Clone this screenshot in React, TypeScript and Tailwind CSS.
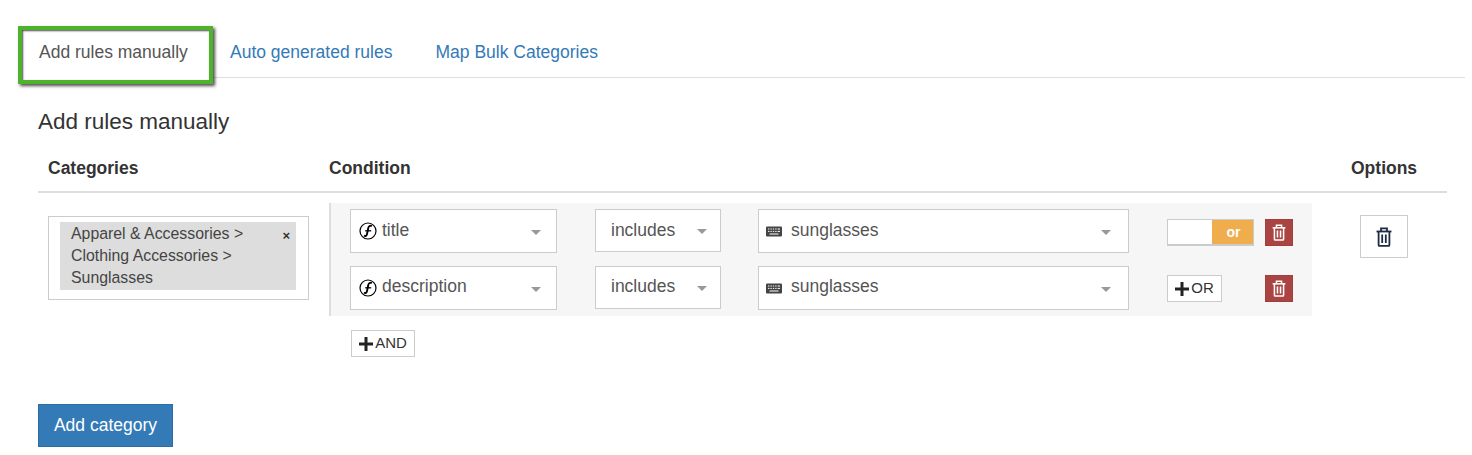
function TrashIcon({ className }: { className?: string }) {
  return (
    <svg viewBox="0 0 16 20" className={className} fill="none" stroke="currentColor" strokeWidth="1.8">
      <path d="M0.5 4.5h15" />
      <path d="M5 4V1.4h6V4" />
      <path d="M2.6 4.5v13.4c0 .6.4 1 1 1h8.8c.6 0 1-.4 1-1V4.5" />
      <path d="M6.2 7.5v8.5M9.8 7.5v8.5" />
    </svg>
  );
}

function FnIcon() {
  return (
    <svg viewBox="0 0 18 18" className="w-[18px] h-[18px] shrink-0 mr-[5px] text-black" fill="none" stroke="currentColor">
      <circle cx="9" cy="9" r="8" strokeWidth="1.2" />
      <path d="M12.8 4.2c-1.6-.9-3.1-.2-3.5 1.7l-1.3 6.2c-.4 1.8-1.4 2.3-3 1.6" strokeWidth="1.9" />
      <path d="M6.2 8.8h6" strokeWidth="1.3" />
    </svg>
  );
}

function KeyboardIcon() {
  return (
    <svg viewBox="0 0 16 11" className="w-4 h-[11px] shrink-0 text-[#444]">
      <rect x="0" y="0.5" width="16" height="10" rx="1" fill="currentColor" />
      <path d="M2 3h1.4M4.4 3h1.4M6.8 3h1.4M9.2 3h1.4M11.6 3h2.4M2 5.4h1.4M4.4 5.4h1.4M6.8 5.4h1.4M9.2 5.4h1.4M11.6 5.4h2.4M3.5 8h9" stroke="#fff" strokeWidth="1" />
    </svg>
  );
}

function Caret() {
  return <span className="w-0 h-0 mt-[2px] border-x-[5.5px] border-x-transparent border-t-[5.5px] border-t-[#999] shrink-0" />;
}

function Field({ width, height, icon, label, pad, textShift }: { width: string; height: string; icon?: React.ReactNode; label: string; pad: string; textShift: string }) {
  return (
    <div className={`${width} ${height} ${pad} bg-white border border-[#ccc] flex items-center text-[17.5px] text-[#555] shrink-0`}>
      {icon}
      <span className={`flex-1 ${textShift}`}>{label}</span>
      <Caret />
    </div>
  );
}

function DeleteButton() {
  return (
    <button className="w-[28px] h-[27px] bg-[#a94442] border border-[#a23f3d] flex items-center justify-center text-white">
      <TrashIcon className="w-[14px] h-[17px]" />
    </button>
  );
}

function PlusButton({ label, className }: { label: string; className: string }) {
  return (
    <button className={`${className} h-[27px] bg-white border border-[#ccc] flex items-center justify-center gap-[2px] text-[15px] text-[#333]`}>
      <svg viewBox="0 0 14 14" className="w-[14px] h-[14px] text-[#222]" fill="currentColor">
        <path d="M5.5 0h3v5.5h5.5v3h-5.5v5.5h-3v-5.5h-5.5v-3h5.5z" />
      </svg>
      {label}
    </button>
  );
}

export default function App() {
  return (
    <div className="w-[1472px] h-[455px] bg-white overflow-hidden font-['Liberation_Sans',Arial,sans-serif] text-[#333]">
      <div className="mt-[26px] ml-[18px] w-[1447px] h-[52px] flex items-start border-b border-[#ddd] pt-0">
        <div className="w-[195px] h-[58px] shrink-0 border-[4px] border-[#4fb22b] bg-white shadow-[2px_2px_3px_rgba(0,0,0,0.7),inset_1px_1px_2px_rgba(0,0,0,0.7)] pl-[17px] pt-[10px] text-[17.5px] leading-[24px] text-[#555] relative">
          Add rules manually
        </div>
        <a className="ml-[17px] mt-[14px] text-[17.5px] leading-[24px] text-[#337ab7]">Auto generated rules</a>
        <a className="ml-[43px] mt-[14px] text-[17.5px] leading-[24px] text-[#337ab7]">Map Bulk Categories</a>
      </div>

      <div className="ml-[38px] w-[1409px]">
        <h3 className="mt-[30px] text-[22.5px] leading-[28px] font-normal text-[#333]">Add rules manually</h3>

        <div className="mt-[13px] h-[44px] flex items-start border-b-2 border-[#ddd] text-[17.5px] font-bold leading-[24px] text-[#333]">
          <div className="w-[291px] pl-[10px] pt-[7px]">Categories</div>
          <div className="flex-1 pt-[7px]">Condition</div>
          <div className="w-[96px] pt-[7px]">Options</div>
        </div>

        <div className="flex items-start">
          <div className="w-[291px] pl-[10px] pt-[23px] shrink-0">
            <div className="w-[261px] h-[84px] border border-[#ccc] bg-white pl-[11px] pr-[12px] pt-[5px]">
              <div className="h-[68px] bg-[#ddd] pl-[11px] pr-[6px] pt-px flex items-start text-[15.85px] leading-[22px] text-[#444]">
                <div className="flex-1">
                  Apparel &amp; Accessories &gt;<br />
                  Clothing Accessories &gt;<br />
                  Sunglasses
                </div>
                <span className="text-[13px] font-bold leading-[26px] text-[#333]">×</span>
              </div>
            </div>
          </div>

          <div className="w-[983px] shrink-0 mt-[10px]">
            <div className="h-[113px] bg-[#f6f6f6] border-l-2 border-[#ddd] pl-[19px] pt-[6px] flex flex-col gap-[13px]">
              <div className="flex items-start">
                <Field width="w-[207px]" height="h-[44px]" pad="pl-[8px] pr-[15px]" textShift="-mt-[2px]" icon={<FnIcon />} label="title" />
                <Field width="w-[126px] ml-[38px]" height="h-[43px]" pad="pl-[15px] pr-[13px]" textShift="-mt-[1px]" label="includes" />
                <Field width="w-[371px] ml-[37px]" height="h-[44px]" pad="pl-[7px] pr-[17px]" textShift="-mt-[2px]" icon={<span className="mr-[9px]"><KeyboardIcon /></span>} label="sunglasses" />
                <div className="ml-[38px] mt-[10px] w-[87px] h-[27px] border border-[#ccc] border-b-2 bg-white flex justify-end">
                  <div className="w-[41px] h-[24px] bg-[#f0ad4e] text-white text-[14px] font-bold flex items-center justify-center pl-[2px]">or</div>
                </div>
                <div className="ml-[11px] mt-[10px]"><DeleteButton /></div>
              </div>
              <div className="flex items-start">
                <Field width="w-[207px]" height="h-[44px]" pad="pl-[8px] pr-[15px]" textShift="-mt-[4px]" icon={<FnIcon />} label="description" />
                <Field width="w-[126px] ml-[38px]" height="h-[43px]" pad="pl-[15px] pr-[13px]" textShift="-mt-[2px]" label="includes" />
                <Field width="w-[371px] ml-[37px]" height="h-[44px]" pad="pl-[7px] pr-[17px]" textShift="-mt-[4px]" icon={<span className="mr-[9px]"><KeyboardIcon /></span>} label="sunglasses" />
                <div className="ml-[38px] mt-[9px]"><PlusButton label="OR" className="w-[55px]" /></div>
                <div className="ml-[43px] mt-[9px]"><DeleteButton /></div>
              </div>
            </div>
            <div className="ml-[22px] mt-[14px]"><PlusButton label="AND" className="w-[64px]" /></div>
          </div>

          <div className="ml-[48px] mt-[22px] w-[48px] h-[43px] border border-[#ccc] bg-white flex items-center justify-center text-[#1f2a44]">
            <TrashIcon className="w-[16px] h-[20px]" />
          </div>
        </div>

        <button className="mt-[47px] w-[135px] h-[43px] bg-[#337ab7] border border-[#2e6da4] text-white text-[17.5px] flex items-center justify-center">
          Add category
        </button>
      </div>
    </div>
  );
}
